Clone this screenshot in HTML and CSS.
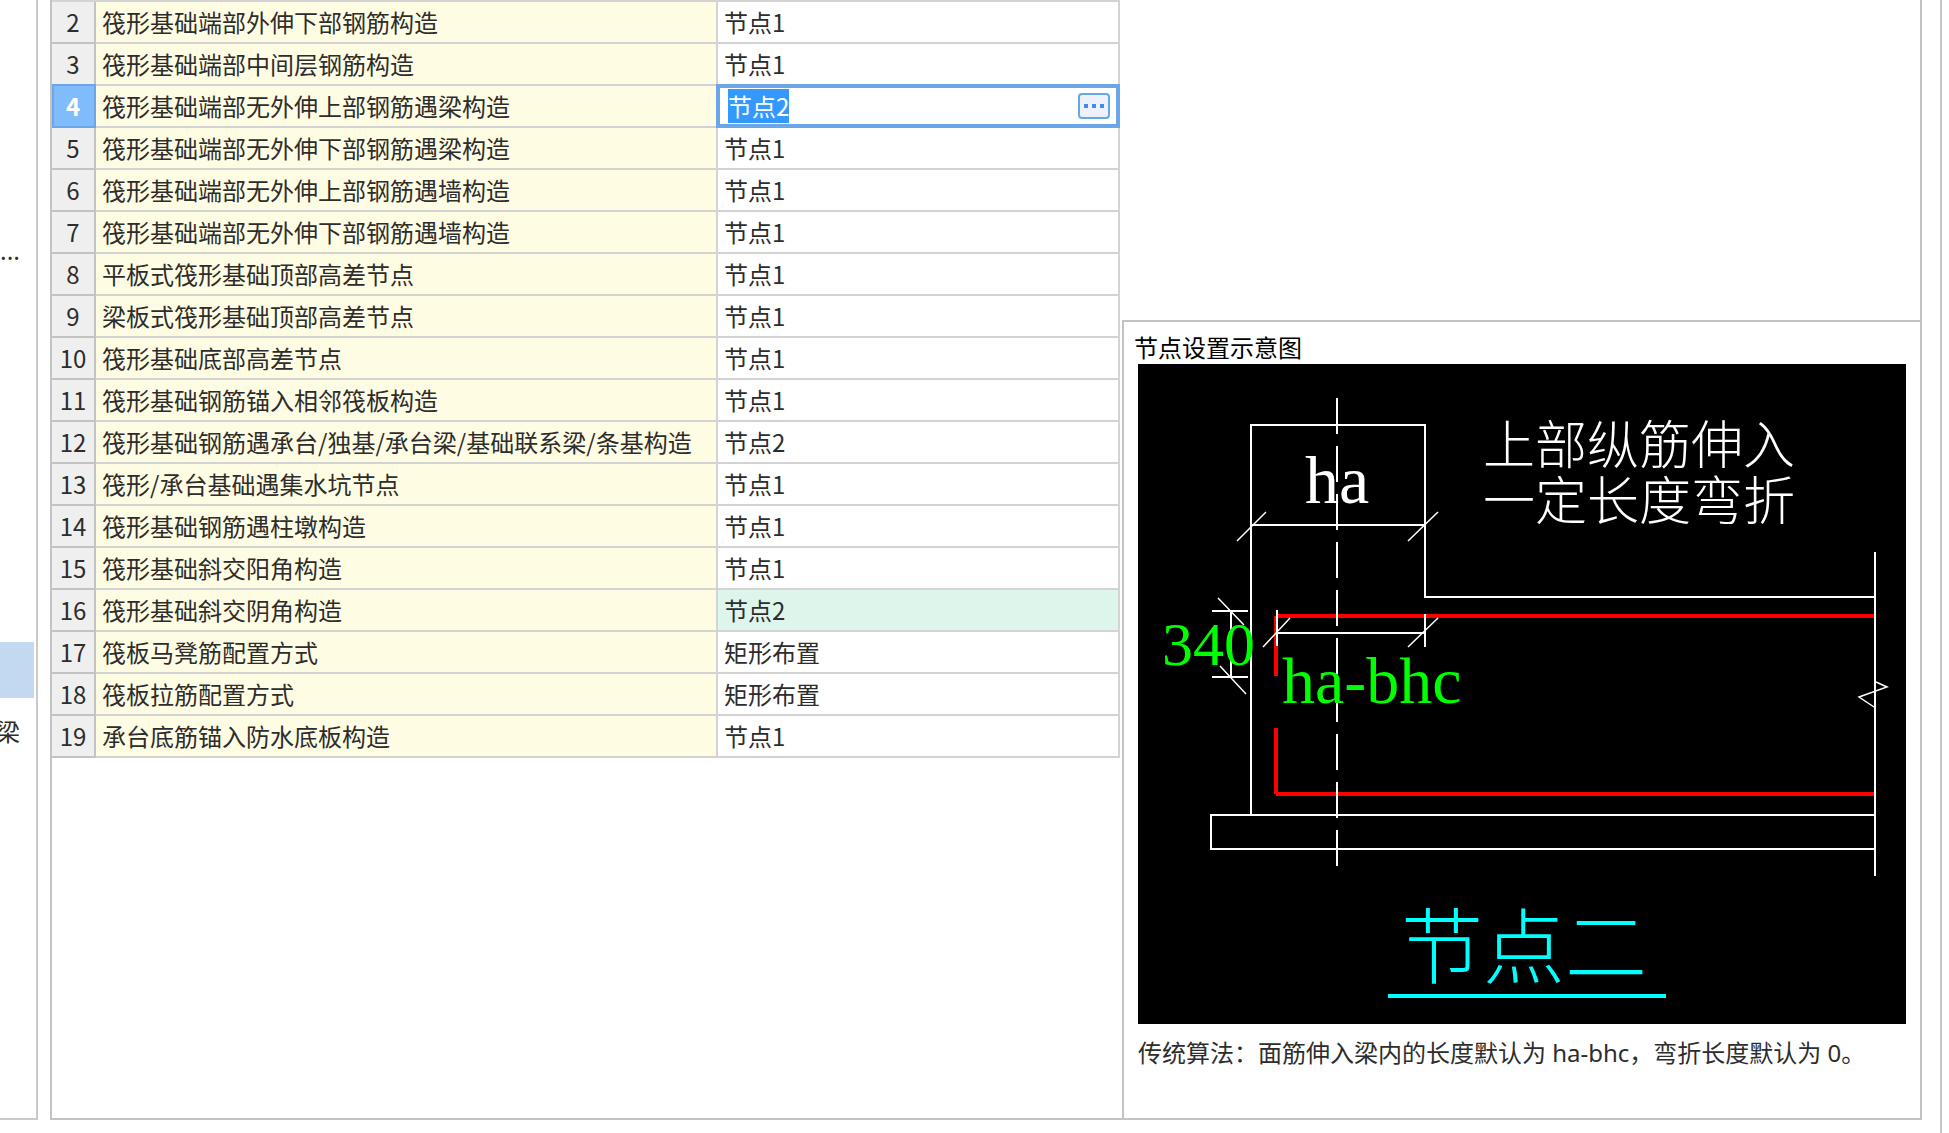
FILE: index.html
```html
<!DOCTYPE html>
<html lang="zh-CN">
<head>
<meta charset="utf-8">
<title>节点设置</title>
<link rel="stylesheet" href="styles.css">
</head>
<body>
<div class="window">
  <nav class="sidebar">
    <ul class="tree">
      <li class="tree-item">...</li>
      <li class="tree-item tree-item-selected"></li>
      <li class="tree-item tree-item-last">梁</li>
    </ul>
  </nav>
  <main class="panel">
    <div class="grid-area">
      <table class="settings">
        <colgroup><col class="col-no"><col><col class="col-value"></colgroup>
        <tbody>
          <tr><th scope="row">2</th><td class="name">筏形基础端部外伸下部钢筋构造</td><td>节点1</td></tr>
          <tr><th scope="row">3</th><td class="name">筏形基础端部中间层钢筋构造</td><td>节点1</td></tr>
          <tr class="current"><th scope="row">4</th><td class="name" id="name4">筏形基础端部无外伸上部钢筋遇梁构造</td><td class="editing"><div class="editor"><input class="editor-input" id="node-value" type="text" value="节点2" aria-labelledby="name4"><button class="more" type="button" aria-label="选择节点"><svg width="20" height="4" viewBox="0 0 20 4"><path d="M0 0h4v4H0zM8 0h4v4H8zM16 0h4v4h-4z"/></svg></button></div></td></tr>
          <tr><th scope="row">5</th><td class="name">筏形基础端部无外伸下部钢筋遇梁构造</td><td>节点1</td></tr>
          <tr><th scope="row">6</th><td class="name">筏形基础端部无外伸上部钢筋遇墙构造</td><td>节点1</td></tr>
          <tr><th scope="row">7</th><td class="name">筏形基础端部无外伸下部钢筋遇墙构造</td><td>节点1</td></tr>
          <tr><th scope="row">8</th><td class="name">平板式筏形基础顶部高差节点</td><td>节点1</td></tr>
          <tr><th scope="row">9</th><td class="name">梁板式筏形基础顶部高差节点</td><td>节点1</td></tr>
          <tr><th scope="row">10</th><td class="name">筏形基础底部高差节点</td><td>节点1</td></tr>
          <tr><th scope="row">11</th><td class="name">筏形基础钢筋锚入相邻筏板构造</td><td>节点1</td></tr>
          <tr><th scope="row">12</th><td class="name">筏形基础钢筋遇承台/独基/承台梁/基础联系梁/条基构造</td><td>节点2</td></tr>
          <tr><th scope="row">13</th><td class="name">筏形/承台基础遇集水坑节点</td><td>节点1</td></tr>
          <tr><th scope="row">14</th><td class="name">筏形基础钢筋遇柱墩构造</td><td>节点1</td></tr>
          <tr><th scope="row">15</th><td class="name">筏形基础斜交阳角构造</td><td>节点1</td></tr>
          <tr><th scope="row">16</th><td class="name">筏形基础斜交阴角构造</td><td class="changed">节点2</td></tr>
          <tr><th scope="row">17</th><td class="name">筏板马凳筋配置方式</td><td>矩形布置</td></tr>
          <tr><th scope="row">18</th><td class="name">筏板拉筋配置方式</td><td>矩形布置</td></tr>
          <tr><th scope="row">19</th><td class="name">承台底筋锚入防水底板构造</td><td>节点1</td></tr>
        </tbody>
      </table>
    </div>
    <section class="preview">
      <h2 class="preview-title">节点设置示意图</h2>
      <svg class="diagram" viewBox="0 0 768 660" role="img" aria-label="节点二">
        <rect width="768" height="660" fill="#000"/>
        <g fill="none" stroke="#f00" stroke-width="4">
          <path d="M138 252V312M140 252H737M138 364V430M138 430H737"/>
        </g>
        <g fill="none" stroke="#fff" stroke-width="2">
          <path d="M113 451V61H287V233H737M737 451H73V485H737M737 188V512"/>
          <path d="M199 34V502" stroke-dasharray="36 12"/>
          <path d="M113 161H287M139 269H287M139 246V282M287 250V283"/>
          <path d="M93 247V313M74 247H110M74 313H110"/>
        </g>
        <g fill="none" stroke="#fff" stroke-width="1.5">
          <path d="M99 177L128 148M270 177L300 148M125 283L152 254M270 283L300 254"/>
          <path d="M80 234L106 261M82 302L108 330"/>
          <path d="M738 318L749 323L721 333L736 343"/>
        </g>
        <g class="cad-latin">
          <text class="white" x="167" y="139" font-size="68">ha</text>
          <text class="green" x="24" y="301" font-size="62">340</text>
          <text class="green" x="144" y="339" font-size="66">ha-bhc</text>
        </g>
        <g class="cad-cjk">
          <text class="white" x="345" y="100" font-size="52">上部纵筋伸入</text>
          <text class="white" x="345" y="156" font-size="52">一定长度弯折</text>
          <text class="cyan" x="263" y="613" font-size="82">节点二</text>
        </g>
        <path d="M250 632H528" stroke="#0ff" stroke-width="4"/>
      </svg>
      <p class="preview-note">传统算法：面筋伸入梁内的长度默认为 ha-bhc，弯折长度默认为 0。</p>
    </section>
  </main>
</div>
<script src="script.js"></script>
</body>
</html>
```
FILE: styles.css
```css
* {
  box-sizing: border-box;
}

body {
  margin: 0;
  background: #fff;
  color: #2d2d2d;
  font: 24px/34px "Noto Sans CJK SC", sans-serif;
}

.window {
  display: flex;
  gap: 12px;
  min-height: 100vh;
  margin-right: 7px;
  padding-right: 18px;
  border-right: 2px solid #c3c6c8;
}

.sidebar {
  flex: 0 0 38px;
  margin-bottom: 13px;
  overflow: hidden;
  border-right: 2px solid #c9c9c9;
  border-bottom: 2px solid #c9c9c9;
}

.tree {
  margin: 0;
  padding: 222px 0 0;
  list-style: none;
}

.tree-item {
  display: flex;
  align-items: center;
  justify-content: flex-end;
  height: 56px;
  padding-right: 16px;
}

.tree-item-selected {
  margin: 364px 2px 0 0;
  background: #c3d9f1;
}

.tree-item-last {
  height: 66px;
}

.panel {
  flex: 1;
  display: grid;
  grid-template-columns: 1070fr 798fr;
  min-width: 0;
  margin-bottom: 13px;
  border: 2px solid #c3c3c3;
  border-top: 0;
}

.grid-area {
  min-width: 0;
  padding-right: 2px;
}

.settings {
  width: 100%;
  table-layout: fixed;
  border-collapse: separate;
  border-spacing: 0;
  border-top: 2px solid #d3d3d3;
}

.col-no {
  width: 44px;
}

.col-value {
  width: 402px;
}

.settings th,
.settings td {
  height: 42px;
  padding: 0 6px;
  border-right: 2px solid #d3d3d3;
  border-bottom: 2px solid #d3d3d3;
  text-align: left;
  font-weight: 400;
  white-space: nowrap;
}

.settings th {
  padding: 0;
  border-color: #c3c3c3;
  background: #efefef;
  text-align: center;
}

.settings .name {
  background: #fffce4;
}

.settings .changed {
  background: #ddf5ea;
}

.settings .current th {
  border-color: #6ba7e8;
  background: #80bcfb;
  box-shadow: 0 -2px 0 #6ba7e8, inset 2px 0 0 #6ba7e8;
  color: #fff;
  font-weight: 700;
}

.settings .editing {
  position: relative;
}

.editor {
  position: absolute;
  inset: -2px;
  display: flex;
  align-items: center;
  padding: 0 6px 0 8px;
  border: 4px solid #6ba7e8;
  background: #fff;
}

.editor-input {
  flex: 1;
  min-width: 0;
  height: 34px;
  padding: 0;
  border: 0;
  outline: 0;
  background: none;
  color: inherit;
  font: inherit;
}

.editor-input::selection {
  background: #39f;
  color: #fff;
}

.more {
  display: flex;
  align-items: center;
  justify-content: center;
  width: 32px;
  height: 26px;
  padding: 0;
  border: 2px solid #62a9e6;
  border-radius: 4px;
  background: #edf1fa;
  fill: #3f8cea;
}

.preview {
  align-self: end;
  min-width: 0;
  padding: 8px 14px 48px;
  border-top: 2px solid #c3c3c3;
  border-left: 2px solid #c3c3c3;
}

.preview-title {
  margin: 0 -4px;
  color: #000;
  font-size: 24px;
  font-weight: 400;
}

.diagram {
  display: block;
  width: 100%;
}

.cad-latin {
  font-family: "Liberation Serif", serif;
}

.cad-cjk {
  font-family: "Noto Sans CJK SC", sans-serif;
  font-weight: 300;
}

.white {
  fill: #fff;
}

.green {
  fill: #0f0;
}

.cyan {
  fill: #0ff;
}

.preview-note {
  margin: 12px 0 0;
  font-family: "Noto Sans", "Noto Sans CJK SC", sans-serif;
}
```
FILE: script.js
```js
const input = document.getElementById("node-value");
input.focus();
input.select();
```
